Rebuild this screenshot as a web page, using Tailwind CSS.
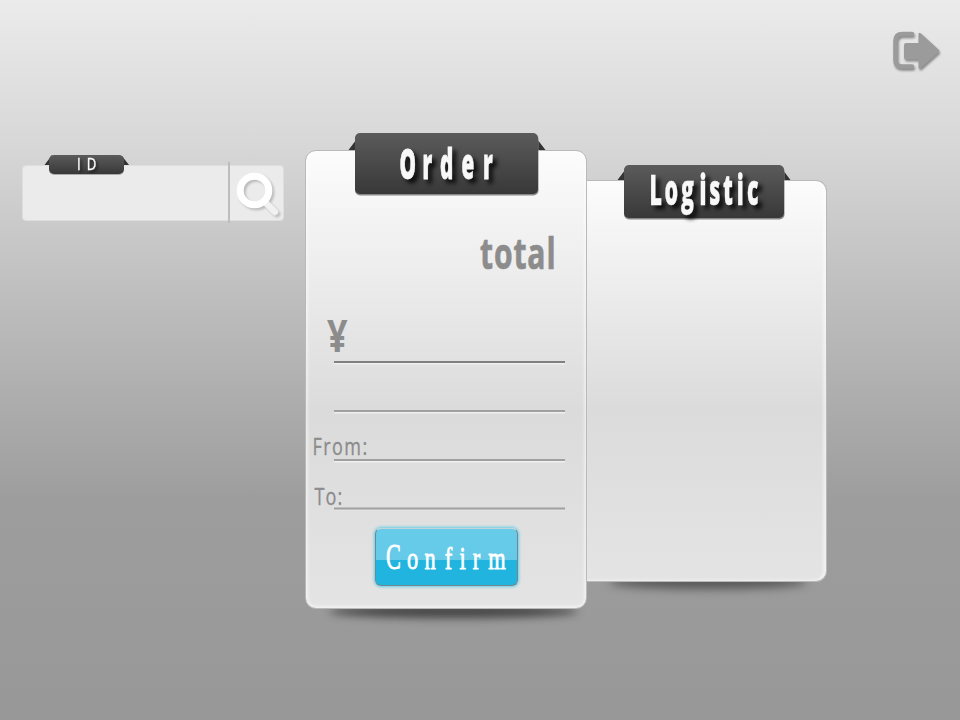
<!DOCTYPE html>
<html lang="en">
<head>
<meta charset="utf-8">
<title>Order</title>
<script src="https://cdn.jsdelivr.net/npm/@tailwindcss/browser@4"></script>
</head>
<body class="w-[960px] h-[720px] overflow-hidden bg-[linear-gradient(to_bottom,#ebebeb_0px,#d8d8d8_140px,#c8c8c8_235px,#9d9d9d_500px,#989898_720px)] font-['Open_Sans',sans-serif]">
<header class="h-[133px] flex justify-end pt-[28px] pr-[16px]">
  <button aria-label="Log out" class="w-[54px] h-[48px]">
    <svg width="54" height="48" viewBox="0 0 54 48" class="drop-shadow-[1px_2px_1px_rgba(0,0,0,0.4)]">
      <path d="M22 6H12.500Q5.500 6 5.500 13V32Q5.500 38.500 12 38.500H22" fill="none" stroke="#9b9b9b" stroke-width="4.500" stroke-linecap="round"/>
      <path d="M14 17Q14 15 16 15H28.500V6Q28.500 4 31 5.500L49 22L49 24L31 40Q28.500 42 28.500 39V31.500H16Q14 31.500 14 29Z" fill="#9b9b9b"/>
    </svg>
  </button>
</header>
<main class="flex items-start pl-[22px]">
  <section class="relative mt-[32px] w-[262px] h-[56px] rounded-[4px] bg-[#ebebeb] border border-[#dedede] flex">
    <input aria-label="ID" class="w-[205px] h-full bg-transparent outline-none">
    <button aria-label="Search" class="relative flex-1 before:absolute before:left-0 before:-top-[4px] before:w-[1.5px] before:h-[61px] before:bg-[#bdbdbd]">
      <svg width="54" height="54" viewBox="0 0 54 54" class="drop-shadow-[2px_2px_1px_rgba(0,0,0,0.2)]">
        <path d="M38 37L47 46" stroke="#f1f1f1" stroke-width="6.500" stroke-linecap="round"/>
        <circle cx="26.500" cy="24.500" r="14.300" fill="none" stroke="#fff" stroke-width="7"/>
      </svg>
    </button>
    <svg class="absolute left-[20px] -top-[12px] overflow-visible" width="88" height="32" viewBox="0 0 88 32">
      <defs><linearGradient id="tab" x2="0" y2="1"><stop stop-color="#5b5b5b"/><stop offset="1" stop-color="#383838"/></linearGradient></defs>
      <path d="M1.500 11L9 1V11ZM79 2L86 11H79Z" fill="#333"/>
      <rect x="6" y="2" width="75" height="19" rx="5" fill="#777" opacity=".55"/>
      <rect x="6" y="1" width="75" height="19" rx="5" fill="url(#tab)"/>
      <g class="drop-shadow-[2px_2px_1px_rgba(0,0,0,0.5)]">
        <text transform="translate(34 15.500) scale(.82 1)" x="0 12" font-size="16" fill="#fafafa" stroke="#fafafa" stroke-width=".4">ID</text>
      </g>
    </svg>
  </section>

  <section class="relative z-10 ml-[21px] mt-[17px] w-[282px] h-[459px]">
    <div class="absolute left-[24px] right-[9px] bottom-[-9px] h-[13px] rounded-[50%] bg-[#444] blur-[4px]"></div>
    <div class="relative h-full rounded-[11px] border border-[#b9b9b9] bg-[linear-gradient(to_bottom,#fcfcfc,#dbdbdb_57%,#e4e4e4)] shadow-[inset_0_0_3px_2px_rgba(255,255,255,0.5)]">
      <svg class="block w-[280px] h-[376px] overflow-visible" viewBox="306 151 280 376">
        <defs><linearGradient id="tab2" x2="0" y2="1"><stop stop-color="#5b5b5b"/><stop offset="1" stop-color="#383838"/></linearGradient></defs>
        <path d="M348.500 150L356 140V150ZM537 139L545.500 150H537Z" fill="#333"/>
        <rect x="355" y="134" width="183.500" height="61.500" rx="5" fill="#888"/>
        <rect x="355" y="133" width="183" height="61" rx="5" fill="url(#tab2)"/>
        <g class="drop-shadow-[4px_4px_2px_rgba(0,0,0,0.8)]">
          <text transform="translate(399.500 179) scale(.48 1)" x="0 48 84.500 129 174" font-size="43" font-weight="800" fill="#f8f8f8" stroke="#f8f8f8" stroke-width=".8">Order</text>
        </g>
        <g fill="#8c8c8c">
          <text transform="translate(480 268.700) scale(.7 1)" textLength="108" font-size="43" font-weight="700" stroke="#8c8c8c" stroke-width=".7">total</text>
          <text transform="translate(327 352) scale(.8 1)" font-size="45" font-weight="700">¥</text>
          <g stroke="#8c8c8c" stroke-width=".35">
            <text transform="translate(312.500 454.600) scale(.75 1)" textLength="73" font-size="24">From:</text>
            <text transform="translate(314.500 504.600) scale(.75 1)" textLength="37" font-size="24">To:</text>
          </g>
        </g>
        <path d="M334 363.500H565M334 412.500H565M334 461.500H565" stroke="#f0f0f0" stroke-width="2"/>
        <path d="M334 510H565" stroke="#e7e7e7"/>
        <path d="M334 362H565" stroke="#808080" stroke-width="2"/>
        <path d="M334 411H565M334 460H565M334 508.500H565" stroke="#a0a0a0" stroke-width="2"/>
      </svg>
      <button class="ml-[69px] mt-[1px] block w-[143px] h-[58px] rounded-[6px] border border-[#708890] border-t-[#c5d4d8] bg-[linear-gradient(to_bottom,#67cce9_0,#64cae8_55%,#20b4df_55%)] shadow-[0_0_3px_1px_#65cce5]">
        <svg width="141" height="56" viewBox="375 529 141 56">
          <g fill="#fff" stroke="#fff" class="font-['Liberation_Serif',serif]">
            <text transform="translate(385 569) scale(.62 1)" x="0" font-size="36" stroke-width=".8">C</text>
            <text transform="translate(385 569) scale(.7 1)" x="30 55 84 105 124 146" font-size="32" stroke-width=".8">onfirm</text>
          </g>
        </svg>
      </button>
    </div>
  </section>

  <section class="relative mt-[47px] w-[240px] h-[402px]">
    <div class="absolute left-[22px] right-[20px] bottom-[-7px] h-[14px] rounded-[50%] bg-[#555] blur-[5px]"></div>
    <div class="relative h-full rounded-r-[11px] border border-l-0 border-[#b9b9b9] bg-[linear-gradient(to_bottom,#fcfcfc,#dbdbdb_57%,#e4e4e4)] shadow-[inset_-2px_0_3px_1px_rgba(255,255,255,0.5)]">
      <svg class="block w-[239px] h-[60px] overflow-visible" viewBox="587 181 239 60">
        <path d="M617.500 180L625 170V180ZM783 170L790.500 180H783Z" fill="#333"/>
        <rect x="624" y="166" width="160.500" height="53.500" rx="5" fill="#888"/>
        <rect x="624" y="165" width="160" height="53" rx="5" fill="url(#tab2)"/>
        <g class="drop-shadow-[4px_4px_2px_rgba(0,0,0,0.8)]">
          <text transform="translate(649.500 205) scale(.51 1)" x="0 29.500 62 98 117 144 171 191" font-size="42" font-weight="800" fill="#f8f8f8" stroke="#f8f8f8" stroke-width=".4">Logistic</text>
        </g>
      </svg>
    </div>
  </section>
</main>
</body>
</html>
